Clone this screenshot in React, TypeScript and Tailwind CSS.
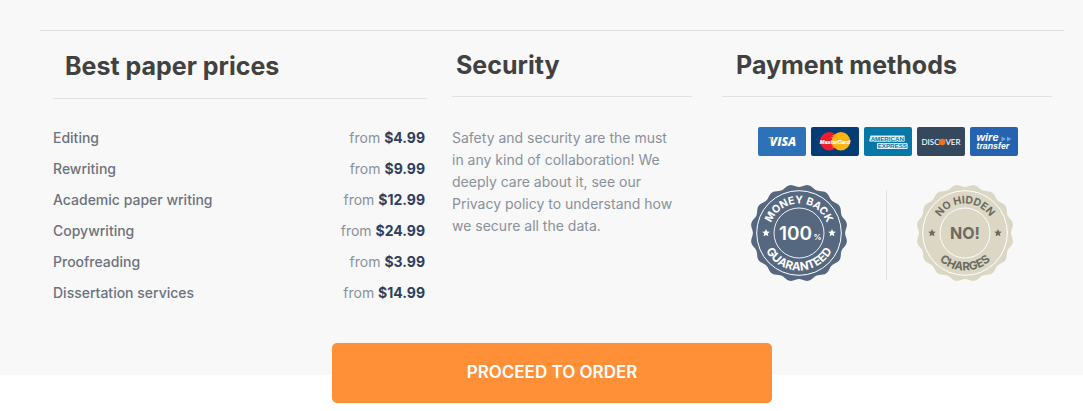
import type { ReactNode } from 'react';

const PRICES = [
  { service: 'Editing', price: '$4.99' },
  { service: 'Rewriting', price: '$9.99' },
  { service: 'Academic paper writing', price: '$12.99' },
  { service: 'Copywriting', price: '$24.99' },
  { service: 'Proofreading', price: '$3.99' },
  { service: 'Dissertation services', price: '$14.99' },
];

// 16 soft lobes around the edge of a 98x98 seal
const SEAL_EDGE =
  Array.from({ length: 180 }, (_, i) => {
    const angle = (i * Math.PI) / 90;
    const radius = 47.4 - 1.3 * Math.cos(16 * angle);
    const x = 49 + radius * Math.cos(angle);
    const y = 49 + radius * Math.sin(angle);
    return `${i === 0 ? 'M' : 'L'}${x.toFixed(2)} ${y.toFixed(2)}`;
  }).join('') + 'Z';

const STAR =
  'M0 -4L1.1 -1.4L3.8 -1.2L1.8 0.6L2.4 3.3L0 1.9L-2.4 3.3L-1.8 0.6L-3.8 -1.2L-1.1 -1.4Z';

type SealProps = {
  id: string;
  top: string;
  bottom: string;
  background: string;
  color: string;
  children: ReactNode;
};

function Seal({ id, top, bottom, background, color, children }: SealProps) {
  return (
    <svg
      viewBox="0 0 98 98"
      className="size-[98px] shrink-0 font-['Inter',sans-serif]"
      role="img"
      aria-label={`${top} ${bottom}`}
    >
      <path d={SEAL_EDGE} fill={background} />
      <circle cx="49" cy="49" r="42.3" fill="none" stroke="#fff" strokeWidth="1" />
      <circle cx="49" cy="49" r="25" fill="none" stroke="#fff" strokeWidth="0.9" />
      <path id={`${id}-top`} d="M19.5 49A29.5 29.5 0 0 1 78.5 49" fill="none" />
      <path id={`${id}-bottom`} d="M11.5 49A37.5 37.5 0 0 0 86.5 49" fill="none" />
      <g fill={color}>
        <text fontSize="10.5" fontWeight="700" textAnchor="middle">
          <textPath href={`#${id}-top`} startOffset="50%">
            {top}
          </textPath>
        </text>
        <text fontSize="11.5" fontWeight="700" textAnchor="middle">
          <textPath href={`#${id}-bottom`} startOffset="50%">
            {bottom}
          </textPath>
        </text>
        <path d={STAR} transform="translate(16 49)" />
        <path d={STAR} transform="translate(82 49)" />
        {children}
      </g>
    </svg>
  );
}

function PaymentCards() {
  return (
    <ul className="flex justify-center gap-[5px] pl-px">
      <li>
        <svg viewBox="0 0 48 29" className="h-[29px] w-12" role="img" aria-label="Visa">
          <rect width="48" height="29" rx="2" fill="#2d72b8" />
          <text
            x="25"
            y="19"
            fill="#fff"
            fontSize="12"
            fontWeight="800"
            fontStyle="italic"
            textAnchor="middle"
            className="font-['Open_Sans',sans-serif]"
          >
            VISA
          </text>
          <path d="M10 10H13.5L15.4 15C14.4 12.7 12.4 11 10 10.4Z" fill="#f9a533" />
        </svg>
      </li>
      <li>
        <svg viewBox="0 0 48 29" className="h-[29px] w-12" role="img" aria-label="MasterCard">
          <rect width="48" height="29" rx="2" fill="#043c75" />
          <circle cx="18.3" cy="14.3" r="9.2" fill="#ee1c2e" />
          <circle cx="29.9" cy="14.3" r="9.2" fill="#fdb515" />
          <path
            d="M24.1 8.5H21.5M24.1 10.5H20.5M24.1 18H20.5M24.1 20H21.5"
            stroke="#fdb515"
            strokeWidth="0.8"
          />
          <text
            x="24"
            y="16.6"
            fill="#fff"
            stroke="#fff"
            strokeWidth="0.2"
            fontSize="5.5"
            fontWeight="700"
            fontStyle="italic"
            textAnchor="middle"
            className="font-['Liberation_Sans',sans-serif]"
          >
            MasterCard
          </text>
        </svg>
      </li>
      <li>
        <svg viewBox="0 0 48 29" className="h-[29px] w-12" role="img" aria-label="American Express">
          <rect width="48" height="29" rx="2" fill="#0678a8" />
          <path d="M6.5 8.5H40.5V14.2H5Z M13 16.3H43.5V22H13Z" fill="#d9edf4" />
          <g
            fill="#0678a8"
            stroke="#e8f5f9"
            strokeWidth="1"
            paintOrder="stroke"
            fontSize="6.2"
            fontWeight="700"
            textAnchor="middle"
            className="font-['Liberation_Sans',sans-serif]"
          >
            <text x="23.3" y="13.6">
              AMERICAN
            </text>
            <text x="28.3" y="21.4">
              EXPRESS
            </text>
          </g>
        </svg>
      </li>
      <li>
        <svg viewBox="0 0 48 29" className="h-[29px] w-12" role="img" aria-label="Discover">
          <rect width="48" height="29" rx="2" fill="#34495e" />
          <g fill="#fff" fontSize="8" fontWeight="500" className="font-['Lato',sans-serif]">
            <text x="4.5" y="18">
              DISC
            </text>
            <text x="43.5" y="18" textAnchor="end">
              VER
            </text>
          </g>
          <circle cx="25.2" cy="15" r="3.3" fill="#f46f20" />
        </svg>
      </li>
      <li>
        <svg viewBox="0 0 48 29" className="h-[29px] w-12" role="img" aria-label="Wire transfer">
          <rect width="48" height="29" rx="2" fill="#2563b0" />
          <g
            fill="#fff"
            fontWeight="700"
            fontStyle="italic"
            className="font-['Liberation_Sans',sans-serif]"
          >
            <text x="6.5" y="14" fontSize="11">
              wire
            </text>
            <text x="6.5" y="22.4" fontSize="8.8">
              transfer
            </text>
          </g>
          <path d="M31.5 9.5L36 12L31.5 14.5ZM37 9.5L41.5 12L37 14.5Z" fill="#7ba6dc" />
        </svg>
      </li>
    </ul>
  );
}

export default function App() {
  return (
    <main className="bg-white font-['Inter',sans-serif] text-sm">
      <section className="bg-[#f8f8f8] pt-[30px] pb-[67px]">
        <div className="mr-[19px] ml-10 flex border-t border-[#e1e1e1] pr-3 pl-[13px]">
          <div className="flex-[374]">
            <h2 className="border-b border-[#e1e1e1] pt-[19px] pb-4 pl-3 text-[25px] leading-8 font-bold text-[#414141]">
              Best paper prices
            </h2>
            <table className="mt-[23px] w-full">
              <tbody>
                {PRICES.map(({ service, price }) => (
                  <tr key={service} className="h-[31px]">
                    <th scope="row" className="text-left font-medium text-[#6b737e]">
                      {service}
                    </th>
                    <td className="pr-0.5 text-right text-[#89919b]">
                      from <strong className="font-bold text-[#2f3f5c]">{price}</strong>
                    </td>
                  </tr>
                ))}
              </tbody>
            </table>
          </div>

          <div className="ml-[25px] flex-[240]">
            <h2 className="border-b border-[#e1e1e1] pt-[18px] pb-[15px] pl-1 text-[25px] leading-8 font-bold text-[#414141]">
              Security
            </h2>
            <p className="mt-[30px] pr-3 leading-[22px] text-[#89919b]">
              Safety and security are the must in any kind of collaboration! We deeply care about
              it, see our Privacy policy to understand how we secure all the data.
            </p>
          </div>

          <div className="ml-[30px] flex-[330]">
            <h2 className="mb-[30px] border-b border-[#e1e1e1] pt-[18px] pb-[15px] pl-3.5 text-[25px] leading-8 font-bold text-[#414141]">
              Payment methods
            </h2>
            <PaymentCards />
            <div className="mt-7 flex items-center justify-center pr-2.5">
              <Seal
                id="guarantee"
                top="MONEY BACK"
                bottom="GUARANTEED"
                background="#566880"
                color="#fff"
              >
                <text x="45.5" y="56" fontSize="19" fontWeight="600" textAnchor="middle">
                  100
                </text>
                <text x="63.5" y="56" fontSize="8" fontWeight="600">
                  %
                </text>
              </Seal>
              <div className="mt-1 mr-[29px] ml-[38px] h-[90px] w-px bg-[#e1e1e1]" />
              <Seal
                id="charges"
                top="NO HIDDEN"
                bottom="CHARGES"
                background="#dcd7c4"
                color="#6c6a62"
              >
                <text x="49" y="54.5" fontSize="16" fontWeight="700" textAnchor="middle">
                  NO!
                </text>
              </Seal>
            </div>
          </div>
        </div>
      </section>

      <div className="relative -mt-8 pl-[21px]">
        <button
          type="button"
          className="mx-auto block h-[60px] w-full max-w-[440px] cursor-pointer rounded-[5px] bg-[#ff9038] pb-0.5 text-[17px] font-semibold text-white"
        >
          PROCEED TO ORDER
        </button>
      </div>
    </main>
  );
}
